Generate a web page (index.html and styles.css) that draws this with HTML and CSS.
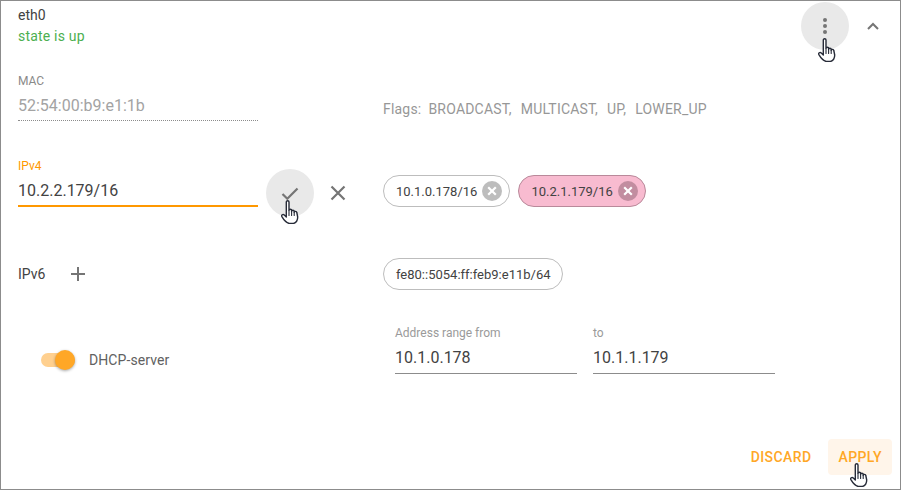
FILE: index.html
```html
<!DOCTYPE html>
<html lang="en">
<head>
<meta charset="utf-8">
<title>eth0</title>
<link rel="stylesheet" href="styles.css">
</head>
<body>
<svg class="defs" width="0" height="0" aria-hidden="true">
  <symbol id="hand" viewBox="0 0 18 24">
    <path d="M5.3 2C5.3.4 8 .4 8 2v8.2c0-1.3 2.6-1.3 2.6 0v1c0-1.3 2.6-1.3 2.6 0v1c0-1.2 2.5-1.2 2.6.3l.9 4.5c0 3-1.4 5.6-4.2 6.5H8.2C6 22.800 2.400 19.200.9 16.600c-.8-1.500 1-2.800 2.400-1.600l2 2z" fill="#fff" stroke="#272b38" stroke-width="1.400" stroke-linejoin="round"/>
    <path d="M8 10.500v5M10.600 11v4.500M13.200 12v3.500" fill="none" stroke="#272b38" stroke-width="1.100" stroke-linecap="round"/>
  </symbol>
  <symbol id="chip-x" viewBox="0 0 20 20">
    <circle cx="10" cy="10" r="10" fill="currentColor"/>
    <path d="M6.200 6.200l7.600 7.600M13.800 6.200l-7.600 7.600" stroke="#fff" stroke-width="2.200" fill="none"/>
  </symbol>
</svg>

<main class="panel">
  <header class="head">
    <div class="head-text">
      <div class="name">eth0</div>
      <div class="state">state is up</div>
    </div>
    <div class="head-actions">
      <button class="icon-btn hover" type="button" aria-label="Menu">
        <svg width="24" height="24" viewBox="0 0 24 24"><circle cx="12" cy="6" r="2" fill="#757575"/><circle cx="12" cy="12" r="2" fill="#757575"/><circle cx="12" cy="18" r="2" fill="#757575"/></svg>
        <svg class="hand"><use href="#hand"/></svg>
      </button>
      <button class="icon-btn" type="button" aria-label="Collapse">
        <svg width="24" height="24" viewBox="0 0 24 24"><path d="M7 15l5-5 5 5" fill="none" stroke="#757575" stroke-width="2"/></svg>
      </button>
    </div>
  </header>

  <section class="row row-mac">
    <div class="field readonly">
      <div class="label">MAC</div>
      <div class="value">52:54:00:b9:e1:1b</div>
    </div>
    <div></div>
    <div class="flags"><span class="flags-title">Flags:</span><span>BROADCAST,</span><span>MULTICAST,</span><span>UP,</span><span>LOWER_UP</span></div>
  </section>

  <section class="row row-ipv4">
    <div class="field focused">
      <div class="label">IPv4</div>
      <div class="value">10.2.2.179/16</div>
    </div>
    <div class="field-actions">
      <button class="icon-btn hover" type="button" aria-label="Confirm">
        <svg width="24" height="24" viewBox="0 0 24 24"><path d="M4.500 13l4.800 4.800L19.500 7.500" fill="none" stroke="#757575" stroke-width="2.200"/></svg>
        <svg class="hand"><use href="#hand"/></svg>
      </button>
      <button class="icon-btn" type="button" aria-label="Cancel">
        <svg width="24" height="24" viewBox="0 0 24 24"><path d="M5.500 5.500l13 13M18.500 5.500l-13 13" fill="none" stroke="#757575" stroke-width="2.200"/></svg>
      </button>
    </div>
    <div class="chips">
      <span class="chip">10.1.0.178/16<svg class="chip-close"><use href="#chip-x"/></svg></span>
      <span class="chip pink">10.2.1.179/16<svg class="chip-close"><use href="#chip-x"/></svg></span>
    </div>
  </section>

  <section class="row row-ipv6">
    <div class="ipv6-head">
      <span class="ipv6-label">IPv6</span>
      <button class="icon-btn" type="button" aria-label="Add">
        <svg width="24" height="24" viewBox="0 0 24 24"><path d="M12 5v14M5 12h14" fill="none" stroke="#757575" stroke-width="2"/></svg>
      </button>
    </div>
    <div></div>
    <div class="chips"><span class="chip plain">fe80::5054:ff:feb9:e11b/64</span></div>
  </section>

  <section class="dhcp">
    <div class="toggle-wrap">
      <span class="toggle"><span class="thumb"></span></span>
      <span class="toggle-label">DHCP-server</span>
    </div>
    <div class="field range">
      <div class="label">Address range from</div>
      <div class="value">10.1.0.178</div>
    </div>
    <div class="field range">
      <div class="label">to</div>
      <div class="value">10.1.1.179</div>
    </div>
  </section>

  <footer class="foot">
    <button class="text-btn" type="button">DISCARD</button>
    <button class="text-btn active" type="button">APPLY<svg class="hand"><use href="#hand"/></svg></button>
  </footer>
</main>
</body>
</html>
```

FILE: styles.css
```css
* { box-sizing: border-box; }
html, body { margin: 0; padding: 0; }
body { width: 901px; height: 490px; overflow: hidden; background: #fff; font-family: Roboto, "Liberation Sans", sans-serif; color: #424242; }
.defs { position: absolute; }
button { font: inherit; background: none; border: 0; padding: 0; margin: 0; }

.panel { width: 901px; height: 490px; border: 1px solid #8c8c8c; display: flex; flex-direction: column; padding-left: 17px; overflow: hidden; }

.head { height: 54px; display: flex; justify-content: space-between; align-items: flex-start; }
.head-text { padding-top: 4px; }
.name { font-size: 14px; line-height: 20px; color: #424242; }
.state { font-size: 14px; line-height: 20px; margin-top: 1px; color: #4caf50; letter-spacing: .2px; }
.head-actions { display: flex; padding-top: 1px; padding-right: 3px; }

.icon-btn { position: relative; width: 48px; height: 48px; border-radius: 50%; display: flex; align-items: center; justify-content: center; }
.icon-btn.hover { background: #e9e9e9; }
.hand { position: absolute; width: 18px; height: 24px; left: 17px; top: 36px; overflow: visible; }
.field-actions .hand { left: 15px; top: 31px; }

.row { display: grid; grid-template-columns: 240px 125px 1fr; }
.row-mac { height: 104px; padding-top: 19px; }
.row-ipv4 { height: 91px; }
.row-ipv6 { height: 72px; }

.field { display: flex; flex-direction: column; }
.label { font-size: 12px; line-height: 14px; color: #8a8a8a; }
.value { font-size: 16px; line-height: 24px; height: 33px; padding-top: 6px; color: #424242; border-bottom: 1px solid #8c8c8c; }
.readonly { height: 47px; }
.readonly .value { color: #a3a3a3; border-bottom: 1px dotted #8c8c8c; }
.focused .label { color: #ff9800; }
.focused .value { border-bottom: 2px solid #ff9800; height: 34px; padding-top: 6px; }

.flags { display: flex; gap: 9px; font-size: 14px; line-height: 16px; color: #979797; padding-top: 27px; letter-spacing: .2px; }
.flags-title { margin-right: -2px; }
.field-actions { display: flex; margin-left: 8px; padding-top: 10px; align-items: flex-start; }

.chips { display: flex; gap: 8px; align-items: flex-start; padding-top: 16px; }
.chip { height: 32px; display: inline-flex; align-items: center; padding: 0 7px 0 12px; border: 1px solid #bdbdbd; border-radius: 16px; font-size: 13px; color: #424242; background: #fff; }
.chip.plain { padding-right: 11px; }
.chip.pink { background: #f8bbd0; border-color: #b9899a; }
.chip-close { width: 20px; height: 20px; margin-left: 5px; color: #bdbdbd; }
.pink .chip-close { color: #c28da0; }

.ipv6-head { display: flex; align-items: center; height: 48px; }
.ipv6-label { font-size: 14px; width: 36px; color: #424242; }
.row-ipv6 .chips { padding-top: 8px; }

.dhcp { display: flex; height: 116px; }
.toggle-wrap { display: flex; align-items: center; width: 377px; padding-left: 23px; height: 50px; margin-top: 13px; }
.toggle { position: relative; width: 34px; height: 14px; border-radius: 7px; background: #ffd08f; margin-right: 14px; }
.thumb { position: absolute; right: 0; top: -3px; width: 20px; height: 20px; border-radius: 50%; background: #ffa726; box-shadow: 0 1px 3px rgba(0,0,0,.35); }
.toggle-label { font-size: 14px; color: #616161; letter-spacing: .1px; }
.range { width: 182px; margin-right: 16px; padding-top: 4px; }
.range .label { color: #9a9a9a; }
.range .value { height: 34px; }

.foot { display: flex; justify-content: flex-end; align-items: center; gap: 7px; padding-right: 8px; margin-top: 1px; }
.text-btn { position: relative; height: 36px; padding: 0 10px; font-size: 14px; font-weight: 500; line-height: 36px; color: #ffa726; border-radius: 4px; letter-spacing: .4px; }
.text-btn.active { background: #fff5ea; }
.text-btn .hand { left: 22px; top: 24px; }
```
